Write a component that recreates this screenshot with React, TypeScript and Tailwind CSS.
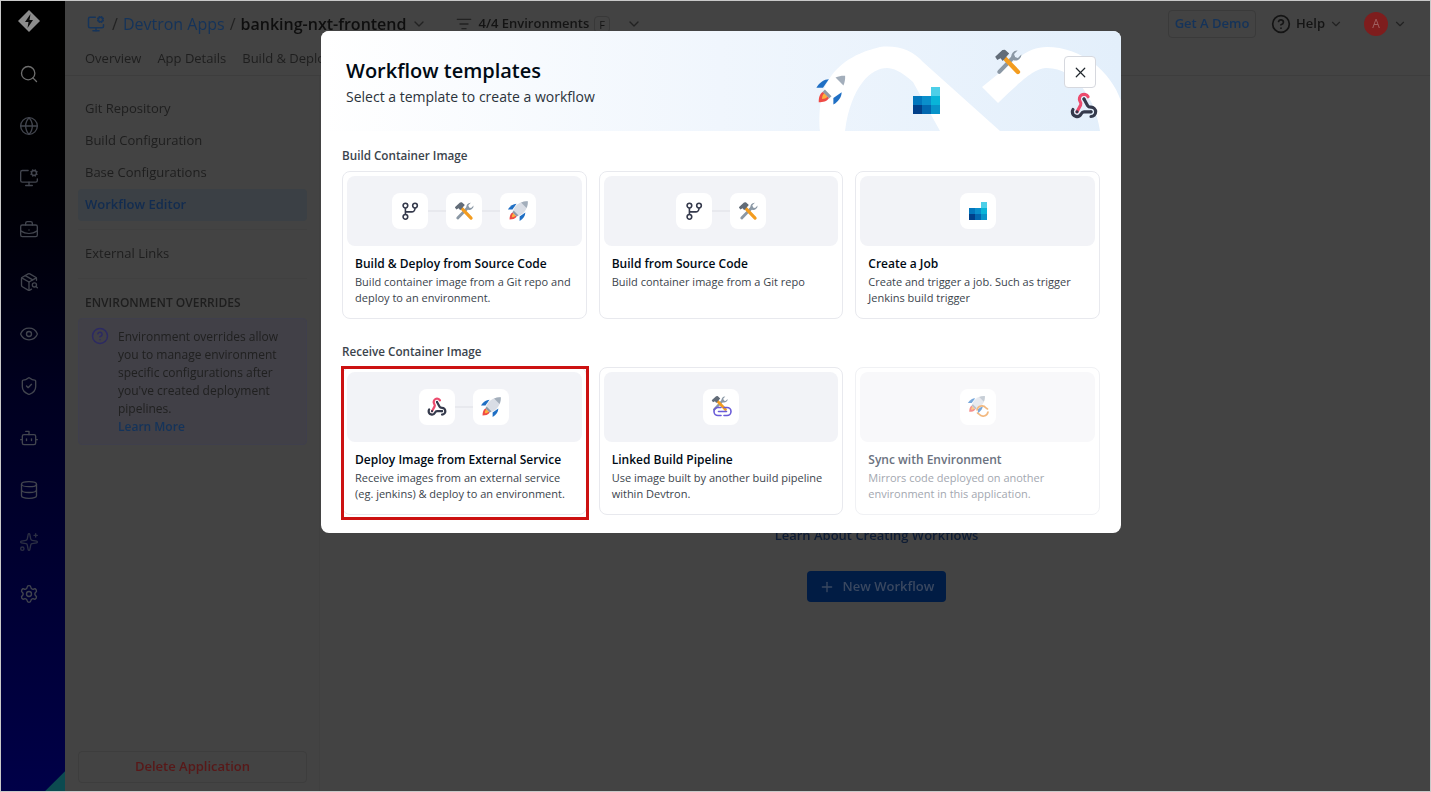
import React from "react";
import { Search, Globe, MonitorCog, BriefcaseBusiness, PackageSearch, Eye, ShieldCheck, Bot, Database, Sparkles, Settings, ChevronDown, CircleHelp, Plus, X, ListFilter } from "lucide-react";

const GitIcon = ({ s = 20 }: { s?: number }) => (
  <svg width={s} height={s} viewBox="0 0 24 24" fill="none" stroke="#353a4c" strokeWidth="1.9">
    <circle cx="6.5" cy="5.5" r="2.8" />
    <circle cx="18" cy="5.5" r="2.8" />
    <circle cx="6.5" cy="19" r="2.8" />
    <path d="M6.5 8.3v7.9M18 8.3v.7a4 4 0 0 1-4 4H6.5" />
  </svg>
);

const ToolsIcon = ({ s = 20 }: { s?: number }) => (
  <svg width={s} height={s} viewBox="0 0 24 24" fill="none">
    <path d="M4.500 20.500 16.500 8" stroke="#8b98a5" strokeWidth="3.400" strokeLinecap="round" />
    <path d="M15 8.500a5 5 0 0 1 5.200-6.300l-3 3 .7 2.600 2.600.7 3-3A5 5 0 0 1 17 10.500Z" fill="#8b98a5" />
    <path d="M9 8.500 20.500 20.500" stroke="#f39c1f" strokeWidth="3.800" strokeLinecap="round" />
    <path d="M1 7.500 7.200 1.800l2.200-.3 3.600 3.300-5.600 6.400-1.800-2.400-2.800 1.400Z" fill="#626c78" />
  </svg>
);

const RocketIcon = ({ s = 22, light = false }: { s?: number; light?: boolean }) => (
  <svg width={s} height={s} viewBox="0 0 24 24" fill="none">
    <g transform="rotate(45 12 12)">
      <path d="M12 -3C16.500 1 18 6 17.500 11L16 16H8L6.500 11C6 6 7.500 1 12 -3Z" fill={light ? "#ffffff" : "#d9dde5"} />
      <path d="M12 -3C13.800 -1.400 15.200 .5 16.200 3H7.800C8.800 .5 10.200 -1.400 12 -3Z" fill="#a3aebb" />
      <path d="M5.200 7.500C2.700 10 2 14 3 18.500L6.500 15Z" fill="#1f6fc4" />
      <path d="M18.800 7.500C21.300 10 22 14 21 18.500L17.500 15Z" fill="#1f6fc4" />
      <rect x="8.500" y="15" width="7" height="2.500" fill="#8f9aa8" />
      <path d="M8.700 17.500h6.600c.6 2.800-1 5.200-3.300 7.500-2.300-2.300-3.900-4.700-3.300-7.500Z" fill="#ef4a45" />
      <path d="M10.300 17.500h3.400c.3 1.400-.6 2.800-1.700 4-1.100-1.200-2-2.600-1.700-4Z" fill="#fbb03b" />
    </g>
  </svg>
);

const StackIcon = ({ s = 18 }: { s?: number }) => (
  <svg width={s} height={s} viewBox="0 0 27 27">
    <rect x="18" y="0" width="9" height="9" fill="#4dcfe8" />
    <rect x="0" y="9" width="9" height="9" fill="#0277bd" />
    <rect x="9" y="9" width="9" height="9" fill="#0a8fcb" />
    <rect x="18" y="9" width="9" height="9" fill="#08b4d8" />
    <rect x="0" y="18" width="9" height="9" fill="#01408a" />
    <rect x="9" y="18" width="9" height="9" fill="#0268b0" />
    <rect x="18" y="18" width="9" height="9" fill="#0893c9" />
  </svg>
);

const WebhookIcon = ({ s = 20 }: { s?: number }) => (
  <svg width={s} height={s} viewBox="0 0 24 24" fill="none" strokeWidth="2.700" strokeLinecap="round" strokeLinejoin="round">
    <path d="M18 16.980h-5.990c-1.100 0-1.950.940-2.480 1.900A4 4 0 0 1 2 17c.010-.7.200-1.400.570-2" stroke="#353a4c" />
    <path d="m6 17 3.130-5.780c.530-.970.100-2.180-.5-3.100a4 4 0 1 1 6.890-4.060" stroke="#ec4b6e" />
    <path d="m12 6 3.130 5.730C15.660 12.700 16.900 13 18 13a4 4 0 0 1 0 8" stroke="#353a4c" />
    <circle cx="12" cy="6" r="1.300" fill="#353a4c" stroke="none" />
    <circle cx="6" cy="17" r="1.300" fill="#353a4c" stroke="none" />
    <circle cx="18" cy="17" r="1.300" fill="#353a4c" stroke="none" />
  </svg>
);

const LinkedIcon = () => (
  <div className="relative w-[20px] h-[20px]">
    <div className="absolute -top-[2px] left-0"><ToolsIcon s={17} /></div>
    <svg className="absolute left-[2px] top-[9px]" width="19" height="11" viewBox="0 0 19 11" fill="none" stroke="#6a5bd8" strokeWidth="1.600" strokeLinecap="round">
      <path d="M8 1.500H5a4 4 0 0 0 0 8h3M11 1.500h3a4 4 0 0 1 0 8h-3M5.500 5.500h8" />
    </svg>
  </div>
);

const SyncIcon = () => (
  <div className="relative w-[20px] h-[20px]">
    <div className="absolute -top-[2px] -left-[1px]"><RocketIcon s={19} /></div>
    <svg className="absolute left-[8px] top-[8px]" width="13" height="12" viewBox="0 0 13 12" fill="none" stroke="#ea8a2b" strokeWidth="1.600" strokeLinecap="round">
      <path d="M1 5a5 5 0 0 1 9-2l1.500 1M12 7a5 5 0 0 1-9 2L1.500 8" />
    </svg>
  </div>
);

const Tile = ({ children }: { children: React.ReactNode }) => (
  <div className="w-[36px] h-[36px] rounded-lg bg-white flex items-center justify-center">{children}</div>
);

const Link18 = () => <div className="w-[18px] h-[2px] bg-[#e8e9ee]" />;

type CardData = {
  title: string;
  desc: string[];
  icons: React.ReactNode[];
  disabled?: boolean;
  marked?: boolean;
};

const Card = ({ c }: { c: CardData }) => (
  <div className={`relative h-[148px] rounded-lg border bg-white p-1 ${c.disabled ? "border-[#f0f1f4]" : "border-[#e8e9ee]"}`}>
    <div className={`h-[70px] rounded-lg flex items-center justify-center ${c.disabled ? "bg-[#f8f8fa]" : "bg-[#f2f3f7]"}`}>
      {c.icons.map((ic, i) => (
        <React.Fragment key={i}>
          {i > 0 && <Link18 />}
          <Tile>{c.disabled ? <div className="opacity-60">{ic}</div> : ic}</Tile>
        </React.Fragment>
      ))}
    </div>
    <div className="px-2 pt-[8px]">
      <div className={`text-[12px] leading-[20px] font-semibold whitespace-nowrap ${c.disabled ? "text-[#6b7280]" : "text-[#000a14]"}`}>{c.title}</div>
      <div className={`mt-[0px] text-[11px] leading-[16px] ${c.disabled ? "text-[#a3a7b0]" : "text-[#3b444c]"}`}>
        {c.desc.map((d) => (
          <div key={d} className="whitespace-nowrap">{d}</div>
        ))}
      </div>
    </div>
    {c.marked && <div className="absolute -left-[2px] -top-[2px] w-[248px] h-[154px] border-[3px] border-[#cc1111] pointer-events-none" />}
  </div>
);

const build: CardData[] = [
  { title: "Build & Deploy from Source Code", desc: ["Build container image from a Git repo and", "deploy to an environment."], icons: [<GitIcon />, <ToolsIcon />, <RocketIcon />] },
  { title: "Build from Source Code", desc: ["Build container image from a Git repo"], icons: [<GitIcon />, <ToolsIcon />] },
  { title: "Create a Job", desc: ["Create and trigger a job. Such as trigger", "Jenkins build trigger"], icons: [<StackIcon />] },
];

const receive: CardData[] = [
  { title: "Deploy Image from External Service", desc: ["Receive images from an external service", "(eg. jenkins) & deploy to an environment."], icons: [<WebhookIcon />, <RocketIcon />], marked: true },
  { title: "Linked Build Pipeline", desc: ["Use image built by another build pipeline", "within Devtron."], icons: [<LinkedIcon />] },
  { title: "Sync with Environment", desc: ["Mirrors code deployed on another", "environment in this application."], icons: [<SyncIcon />], disabled: true },
];

const railIcons = [Search, Globe, MonitorCog, BriefcaseBusiness, PackageSearch, Eye, ShieldCheck, Bot, Database, Sparkles, Settings];

const Rail = () => (
  <aside className="relative w-[64px] shrink-0 flex flex-col items-center pr-[8px] bg-gradient-to-b from-[#000000] via-[#000020] to-[#000048] overflow-hidden">
    <svg className="mt-[8px]" width="24" height="24" viewBox="0 0 24 24">
      <path d="M12 1 23 12 12 23 1 12Z" fill="#8c8c8c" />
      <path d="M13.500 5 8 13h3.500l-1 6 5.500-8h-3.500Z" fill="#0a0a0a" />
    </svg>
    <div className="mt-[31px] flex flex-col gap-[32px]">
      {railIcons.map((I, i) => (
        <I key={i} size={20} strokeWidth={1.600} className={i === 0 ? "text-[#6e6e6e]" : i === 9 ? "text-[#2c2f44]" : "text-[#42454f]"} />
      ))}
    </div>
    <div className="absolute -right-[14px] -bottom-[14px] w-[28px] h-[28px] rotate-45 bg-[#0c4a50]" />
  </aside>
);

const NavItem = ({ label, active }: { label: string; active?: boolean }) => (
  <div className={`h-[32px] flex items-center px-[7px] rounded text-[13px] ${active ? "bg-[#3b4045] text-[#122c50] font-semibold" : "text-[#1e1e1e]"}`}>{label}</div>
);

const Background = () => (
  <div className="absolute inset-0 flex blur-[0.7px] bg-[#434343]">
    <Rail />
    <div className="flex-1 flex flex-col min-w-0">
      <header className="h-[75px] shrink-0 border-b border-[#3d3d3d] pl-[22px] pr-[20px] flex flex-col">
        <div className="h-[46px] flex items-center">
          <MonitorCog size={18} className="text-[#16345a]" />
          <span className="ml-[7px] text-[16px] text-[#222222]">/</span>
          <span className="ml-[5px] text-[16px] text-[#14335a]">Devtron Apps</span>
          <span className="ml-[5px] text-[16px] text-[#222222]">/</span>
          <span className="ml-[5px] text-[16px] font-semibold text-[#0e0e0e] whitespace-nowrap">banking-nxt-frontend</span>
          <ChevronDown size={16} className="ml-[5px] text-[#222222]" />
          <ListFilter size={16} className="ml-[29px] text-[#222222]" />
          <span className="ml-[6px] text-[13px] font-semibold text-[#141414] whitespace-nowrap">4/4 Environments</span>
          <span className="ml-[5px] px-[4px] rounded border border-[#383838] text-[11px] leading-[15px] text-[#141414]">F</span>
          <ChevronDown size={16} className="ml-[16px] text-[#222222]" />
          <div className="ml-auto flex items-center">
            <div className="w-[88px] h-[28px] rounded border border-[#3a3a3a] flex items-center justify-center text-[13px] font-semibold text-[#14335a]">Get A Demo</div>
            <CircleHelp size={20} className="ml-[15px] text-[#141414]" />
            <span className="ml-[5px] text-[13px] font-semibold text-[#141414]">Help</span>
            <ChevronDown size={14} className="ml-[4px] text-[#222222]" />
            <div className="ml-[21px] w-[24px] h-[24px] rounded-full bg-[#7e1d1d] flex items-center justify-center text-[12px] text-[#a06060]">A</div>
            <ChevronDown size={14} className="ml-[5px] mr-[3px] text-[#222222]" />
          </div>
        </div>
        <div className="-ml-[2px] flex gap-[16px] text-[13px] text-[#1e1e1e] pt-[2px]">
          <span>Overview</span>
          <span>App Details</span>
          <span className="whitespace-nowrap">Build &amp; Deploy</span>
        </div>
      </header>
      <div className="flex-1 flex min-h-0">
        <div className="w-[255px] shrink-0 border-r border-[#404040] pl-[13px] pr-[12px] pt-[17px] pb-[8px] flex flex-col">
          <NavItem label="Git Repository" />
          <NavItem label="Build Configuration" />
          <NavItem label="Base Configurations" />
          <NavItem label="Workflow Editor" active />
          <div className="my-[8px] h-px bg-[#404040]" />
          <NavItem label="External Links" />
          <div className="mt-[8px] h-px bg-[#404040]" />
          <div className="mt-[16px] px-[7px] text-[12px] leading-[16px] font-semibold text-[#1e1e1e] whitespace-nowrap">ENVIRONMENT OVERRIDES</div>
          <div className="mt-[7px] h-[127px] rounded border border-[#3f3f4c] bg-[#414047] flex pl-[12px] pt-[8px]">
            <CircleHelp size={18} className="shrink-0 text-[#2c2a63]" />
            <div className="ml-[9px] mt-[1px] text-[12px] leading-[18px] text-[#202020] whitespace-nowrap">
              <div>Environment overrides allow</div>
              <div>you to manage environment</div>
              <div>specific configurations after</div>
              <div>you've created deployment</div>
              <div>pipelines.</div>
              <div className="text-[#14335a] font-semibold">Learn More</div>
            </div>
          </div>
          <div className="mt-auto h-[32px] rounded border border-[#3d3d3d] flex items-center justify-center text-[13px] font-semibold text-[#581818]">Delete Application</div>
        </div>
        <div className="flex-1 flex flex-col items-center pt-[449px] pl-[3px]">
          <div className="text-[13px] leading-[20px] font-semibold text-[#0e1c34] whitespace-nowrap">Learn About Creating Workflows</div>
          <div className="mt-[26px] w-[139px] h-[31px] rounded bg-[#011c44] flex items-center justify-center gap-[8px] text-[13px] font-semibold text-[#3a4860]">
            <Plus size={16} />
            New Workflow
          </div>
        </div>
      </div>
    </div>
  </div>
);

const Modal = () => (
  <div className="absolute left-[320px] top-[30px] w-[800px] h-[502px] rounded-lg bg-white overflow-hidden flex flex-col">
    <div className="relative h-[100px] shrink-0 overflow-hidden bg-gradient-to-r from-[#ffffff] via-[#f0f6fd] to-[#e3effb] pl-[25px] pt-[26px]">
      <svg className="absolute left-0 top-0 pointer-events-none" width="800" height="100" viewBox="0 0 800 100" fill="#ffffff">
        <path d="M499 100C497 70 500 30 559 16C578 14 592 20 602 31L679 100H619L592 51C580 40 572 37 566 37C550 37 530 55 524 100Z" />
        <path d="M661 56 692 31C705 20 715 16 726 16C760 16 790 40 800 70V100H779C775 70 755 37 726 37C715 37 705 45 677 72Z" />
      </svg>
      <div className="relative text-[20px] leading-[28px] font-semibold text-[#000a14]">Workflow templates</div>
      <div className="relative text-[14px] leading-[20px] mt-[2px] text-[#2b333b]">Select a template to create a workflow</div>
      <div className="absolute left-[494px] top-[43px]"><RocketIcon s={32} light /></div>
      <div className="absolute left-[592px] top-[56px]"><StackIcon s={27} /></div>
      <div className="absolute left-[673px] top-[17px]"><ToolsIcon s={28} /></div>
      <div className="absolute left-[749px] top-[61px]"><WebhookIcon s={28} /></div>
      <div className="absolute left-[743px] top-[25px] w-[32px] h-[32px] rounded border border-[#d6d8de] bg-white flex items-center justify-center">
        <X size={17} strokeWidth={1.700} className="text-[#20262c]" />
      </div>
    </div>
    <div className="px-[21px] pt-[14px]">
      <div className="text-[11.7px] leading-[20px] font-semibold text-[#3b444c]">Build Container Image</div>
      <div className="mt-[6px] grid grid-cols-3 gap-[12px]">
        {build.map((c) => <Card key={c.title} c={c} />)}
      </div>
      <div className="mt-[22px] text-[11.7px] leading-[20px] font-semibold text-[#3b444c]">Receive Container Image</div>
      <div className="mt-[6px] grid grid-cols-3 gap-[12px]">
        {receive.map((c) => <Card key={c.title} c={c} />)}
      </div>
    </div>
  </div>
);

export default function App() {
  return (
    <div className="w-[1431px] h-[792px] overflow-hidden border border-[#c9c9c9] font-['Open_Sans',sans-serif] bg-[#434343]">
      <div className="relative w-full h-full overflow-hidden">
        <Background />
        <Modal />
      </div>
    </div>
  );
}
